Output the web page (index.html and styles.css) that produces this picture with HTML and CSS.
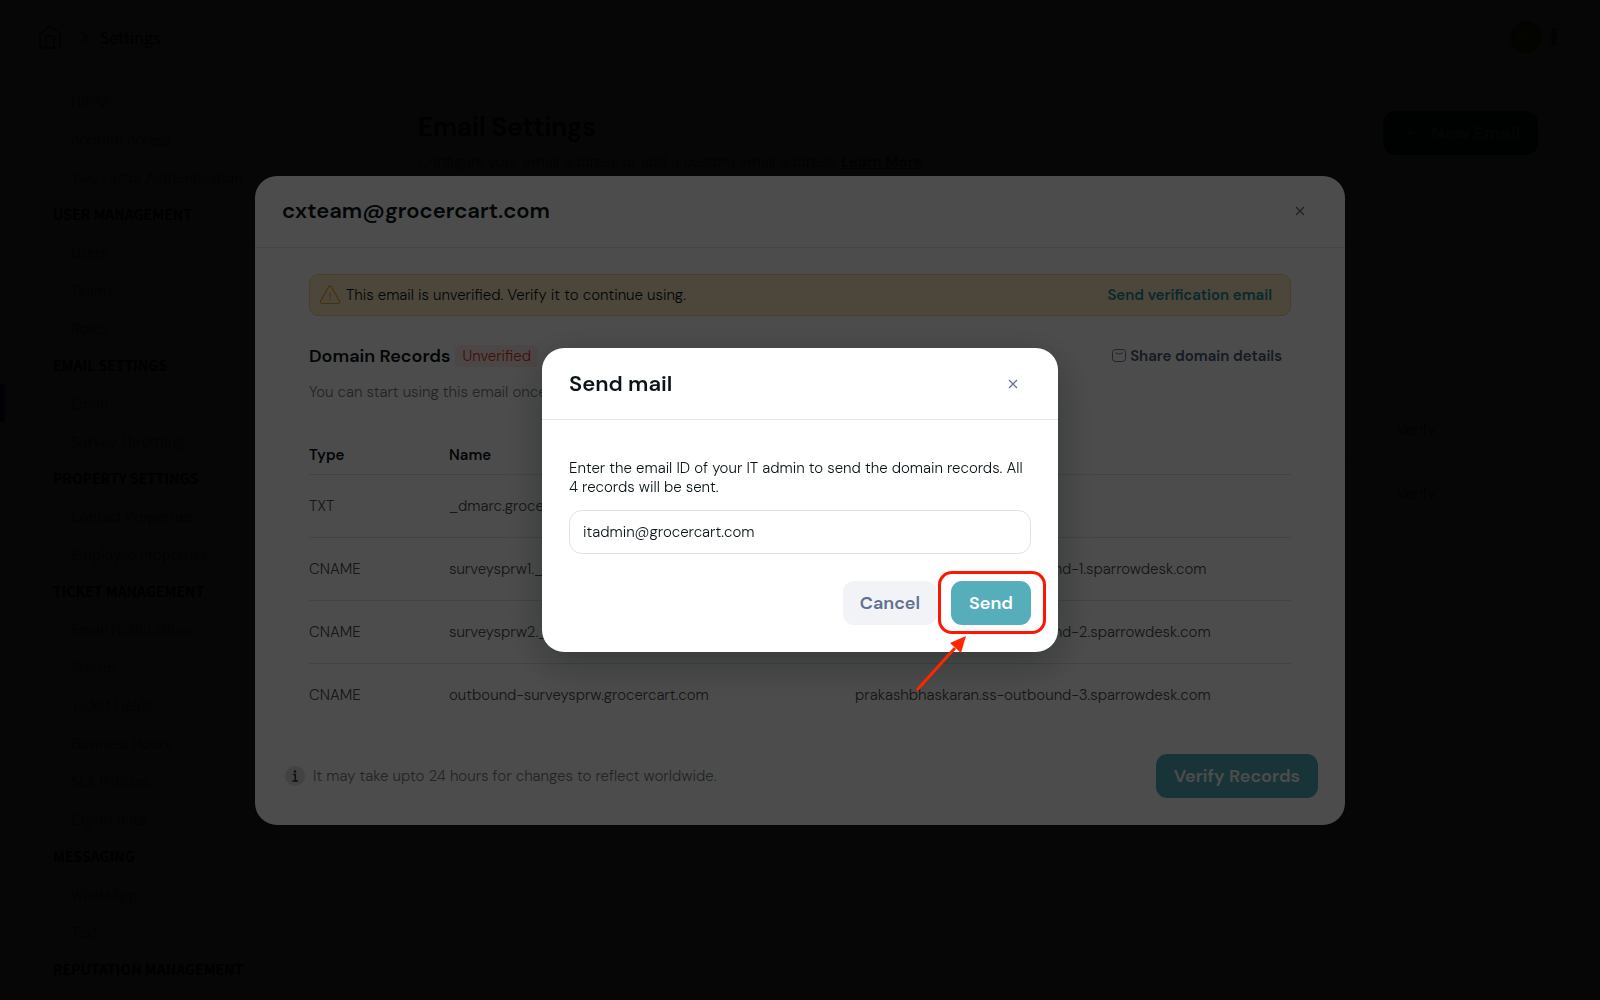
FILE: index.html
```html
<!DOCTYPE html>
<html lang="en">
<head>
<meta charset="utf-8">
<meta name="viewport" content="width=device-width, initial-scale=1">
<title>Email Settings</title>
<link rel="stylesheet" href="styles.css">
</head>
<body>
<div class="app">
  <header class="topbar">
    <nav class="crumbs" aria-label="Breadcrumb">
      <a href="#" class="home" aria-label="Home">
        <svg width="24" height="26" viewBox="0 0 24 26" fill="none" stroke="currentColor" stroke-width="2" stroke-linejoin="round"><path d="M2 10 12 2l10 8v12a2 2 0 0 1-2 2H4a2 2 0 0 1-2-2z"/><path d="M8 24V14q0-2 2-2h4q2 0 2 2v10"/></svg>
      </a>
      <svg class="chevron" width="8" height="14" viewBox="0 0 8 14" fill="none" stroke="currentColor" stroke-width="2"><path d="m1 1 6 6-6 6"/></svg>
      <a href="#" class="crumb">Settings</a>
    </nav>
    <div class="account">
      <span class="avatar">PB</span>
      <button class="more" aria-label="More">
        <svg width="6" height="18" viewBox="0 0 6 18" fill="none" stroke="currentColor" stroke-width="1.5"><circle cx="3" cy="3" r="2"/><circle cx="3" cy="9" r="2"/><circle cx="3" cy="15" r="2"/></svg>
      </button>
    </div>
  </header>
  <div class="columns">
    <nav class="sidebar" aria-label="Settings">
      <a href="#">HIPAA</a>
      <a href="#">Account Access</a>
      <a href="#">Two Factor Authentication</a>
      <h2>USER MANAGEMENT</h2>
      <a href="#">Users</a>
      <a href="#">Teams</a>
      <a href="#">Roles</a>
      <h2>EMAIL SETTINGS</h2>
      <a href="#" class="active">Email</a>
      <a href="#">Survey Throttling</a>
      <h2>PROPERTY SETTINGS</h2>
      <a href="#">Contact Properties</a>
      <a href="#">Employee Properties</a>
      <h2>TICKET MANAGEMENT</h2>
      <a href="#">Email Notifications</a>
      <a href="#">Macros</a>
      <a href="#">Ticket Fields</a>
      <a href="#">Business Hours</a>
      <a href="#">SLA Policies</a>
      <a href="#">Export data</a>
      <h2>MESSAGING</h2>
      <a href="#">WhatsApp</a>
      <a href="#">Text</a>
      <h2>REPUTATION MANAGEMENT</h2>
    </nav>
    <main class="main">
      <div class="page-head">
        <div>
          <h1>Email Settings</h1>
          <p>Configure your email address or add a custom email address. <a href="#">Learn More</a></p>
        </div>
        <button class="new-email">
          <svg width="14" height="14" viewBox="0 0 14 14" fill="none" stroke="currentColor" stroke-width="1.5"><path d="M7 1v12M1 7h12"/></svg>
          New Email
        </button>
      </div>
      <ul class="emails">
        <li><button>Verify</button></li>
        <li><button>Verify</button></li>
      </ul>
    </main>
  </div>
</div>

<div class="overlay overlay-page">
  <section class="modal records" role="dialog" aria-labelledby="records-title">
    <header class="modal-head">
      <h2 id="records-title">cxteam@grocercart.com</h2>
      <button class="close" aria-label="Close"><svg width="10" height="10" viewBox="0 0 10 10" fill="none" stroke="currentColor" stroke-width="1.2"><path d="m1 1 8 8M9 1 1 9"/></svg></button>
    </header>
    <div class="records-body">
      <div class="notice">
        <svg width="22" height="20" viewBox="0 0 22 20" fill="none" stroke="currentColor" stroke-width="1.2" stroke-linejoin="round" stroke-linecap="round"><path d="M9.500 2a1.800 1.800 0 0 1 3 0l8 14a1.700 1.700 0 0 1-1.500 2.500H3A1.700 1.700 0 0 1 1.500 16z"/><path d="M11 7.500v4.500M11 14.500v.2"/></svg>
        <span>This email is unverified. Verify it to continue using.</span>
        <button class="resend">Send verification email</button>
      </div>
      <div class="domain-head">
        <h3>Domain Records</h3>
        <span class="tag">Unverified</span>
        <button class="share">
          <svg width="14" height="13" viewBox="0 0 14 13" fill="none" stroke="currentColor" stroke-width=".8"><rect x=".5" y=".5" width="13" height="12" rx="3"/><path d="M3.500 4q3.500 2.500 7 0" stroke-linecap="round"/></svg>
          Share domain details
        </button>
      </div>
      <p class="hint">You can start using this email once</p>
      <table class="dns">
        <thead><tr><th class="type">Type</th><th class="name">Name</th><th aria-label="Value"></th></tr></thead>
        <tbody>
          <tr><td>TXT</td><td>_dmarc.grocercart.com</td><td>v=DMARC1; p=none</td></tr>
          <tr><td>CNAME</td><td>surveysprw1._domainkey.grocercart.com</td><td>prakashbhaskaran.ss-outbound-1.sparrowdesk.com</td></tr>
          <tr><td>CNAME</td><td>surveysprw2._domainkey.grocercart.com</td><td>prakashbhaskaran.ss-outbound-2.sparrowdesk.com</td></tr>
          <tr><td>CNAME</td><td>outbound-surveysprw.grocercart.com</td><td>prakashbhaskaran.ss-outbound-3.sparrowdesk.com</td></tr>
        </tbody>
      </table>
    </div>
    <footer class="records-foot">
      <svg class="info" width="20" height="20" viewBox="0 0 20 20"><circle cx="10" cy="10" r="10" fill="#dcdcdc"/><circle cx="10" cy="5.500" r="1.200" fill="#333"/><path d="M8 8.500h2.300V15M7.500 15h5.500" fill="none" stroke="#333" stroke-width="1.500"/></svg>
      <span>It may take upto 24 hours for changes to reflect worldwide.</span>
      <button class="btn primary">Verify Records</button>
    </footer>
  </section>
</div>

<div class="overlay overlay-modal">
  <form class="modal send" role="dialog" aria-labelledby="send-title">
    <header class="modal-head">
      <h2 id="send-title">Send mail</h2>
      <button type="button" class="close" aria-label="Close"><svg width="10" height="10" viewBox="0 0 10 10" fill="none" stroke="currentColor" stroke-width="1.2"><path d="m1 1 8 8M9 1 1 9"/></svg></button>
    </header>
    <div class="send-body">
      <label for="admin">Enter the email ID of your IT admin to send the domain records. All 4 records will be sent.</label>
      <input id="admin" type="email" value="itadmin@grocercart.com">
      <div class="actions">
        <button type="button" class="btn">Cancel</button>
        <div class="marked">
          <button type="button" class="btn primary">Send</button>
          <span class="ring"></span>
          <svg class="arrow" width="52" height="56" viewBox="0 0 52 56"><path d="M2 55 40 13" stroke="#ff2600" stroke-width="3"/><path d="M51 1 46 18 35 8z" fill="#ff2600"/></svg>
        </div>
      </div>
    </div>
  </form>
</div>
</body>
</html>
```
FILE: styles.css
```css
* { box-sizing: border-box; }

body {
  margin: 0;
  height: 100vh;
  overflow: hidden;
  background: #fff;
  color: #0b1518;
  font: 15px/20px "DM Sans", Inter, sans-serif;
  font-weight: 300;
}

h1, h2, h3, p, ul { margin: 0; padding: 0; }
button { border: 0; padding: 0; background: none; font: inherit; color: inherit; cursor: pointer; white-space: nowrap; }

/* Page behind the dialogs */
.topbar {
  display: flex;
  align-items: center;
  justify-content: space-between;
  height: 74px;
  padding: 0 43px 0 38px;
}
.crumbs { display: flex; align-items: center; gap: 18px; font: 16px/24px "Noto Sans CJK SC", sans-serif; }
.home { display: flex; color: #777; }
.chevron { color: #999; margin-right: -6px; }
.crumb { color: #000; text-decoration: none; }
.account { display: flex; align-items: center; gap: 9px; }
.avatar {
  width: 32px;
  height: 32px;
  border-radius: 50%;
  background: #8a8020;
  color: #ddd;
  text-align: center;
  line-height: 32px;
}
.more { display: flex; color: #222; }

.columns { display: flex; }
.sidebar { flex: 0 0 255px; margin-top: 8px; font: 14px/38px "Noto Sans CJK SC", sans-serif; }
.sidebar a { display: block; padding-left: 71px; color: #888; text-decoration: none; white-space: nowrap; }
.sidebar h2 { padding-left: 53px; font-size: 14px; line-height: 37px; font-weight: 700; color: #000; white-space: nowrap; }
.sidebar .active { padding-left: 66px; border-left: 5px solid #0010ff; }

.main { flex: 1; padding: 37px 62px 0 163px; }
.page-head { display: flex; justify-content: space-between; align-items: flex-start; }
.page-head h1 { font-size: 26px; line-height: 32px; font-weight: 600; }
.page-head p { margin-top: 8px; color: #666; line-height: 22px; }
.page-head p a { color: #1a6a6a; font-weight: 600; }
.new-email {
  display: flex;
  align-items: center;
  gap: 14px;
  height: 44px;
  padding: 0 18px 0 20px;
  border-radius: 12px;
  background: #286c68;
  color: #bbb;
  font-size: 18px;
  font-weight: 600;
}
.emails { margin-top: 226px; list-style: none; }
.emails li { display: flex; justify-content: flex-end; height: 63px; padding: 21px 102px 0 0; }
.emails li + li { border-top: 1px solid #ccc; }
.emails button { height: 20px; color: #555; }

/* Dialog layers */
.overlay { position: fixed; inset: 0; display: flex; align-items: center; justify-content: center; }
.overlay-page { background: rgba(0, 0, 0, .92); }
.overlay-modal { background: rgba(0, 0, 0, .7); }
.modal { background: #fff; border-radius: 22px; }
.modal-head {
  display: flex;
  align-items: center;
  justify-content: space-between;
  height: 72px;
  padding: 0 40px 0 27px;
  border-bottom: 1px solid #e6e7ea;
}
.modal-head h2 { font-size: 22px; line-height: 28px; font-weight: 600; }
.close { display: flex; color: #5f6f88; }
.btn {
  height: 44px;
  padding: 0 17px;
  border-radius: 11px;
  background: #f2f3f6;
  color: #5f7190;
  font-size: 18px;
  font-weight: 600;
}
.primary { padding: 0 18px; background: #56aebb; color: #fff; }

/* Domain records */
.records { width: 1090px; max-width: calc(100% - 64px); }
.records-body { padding: 26px 54px 0; }
.notice {
  display: flex;
  align-items: center;
  gap: 5px;
  height: 42px;
  padding: 0 18px 0 9px;
  border: 1px solid #f5cf90;
  border-radius: 9px;
  background: #ffebc6;
}
.notice svg { color: #f0a030; }
.resend { margin-left: auto; color: #1f8a98; font-weight: 600; }
.domain-head { display: flex; align-items: center; gap: 5px; margin-top: 28px; padding-right: 9px; }
.domain-head h3 { font-size: 18px; line-height: 24px; font-weight: 600; }
.tag { padding: 1px 7px; border-radius: 5px; background: #ffeeea; color: #d8361c; }
.share { display: flex; align-items: center; gap: 4px; margin-left: auto; color: #4c5878; font-weight: 600; }
.hint { margin-top: 14px; color: #767a80; }
.dns { width: 100%; margin-top: 35px; border-collapse: collapse; table-layout: fixed; text-align: left; }
.dns th { height: 38px; padding: 0; font-weight: 600; border-bottom: 1px solid #dfe2e5; }
.dns td { height: 63px; padding: 0; color: #4a4d52; }
.dns tr + tr td { border-top: 1px solid #dfe2e5; }
.dns .type { width: 140px; }
.dns .name { width: 406px; }
.records-foot { display: flex; align-items: center; gap: 8px; padding: 27px 27px 27px 30px; color: #767a80; }
.records-foot .btn { margin-left: auto; }

/* Send mail */
.send { width: 516px; max-width: calc(100% - 64px); box-shadow: 0 12px 40px rgba(0, 10, 10, .3); }
.send-body { padding: 39px 27px 27px; }
.send-body label { display: block; line-height: 19px; }
.send-body input {
  width: 100%;
  height: 44px;
  margin-top: 13px;
  padding: 0 13px;
  border: 1px solid #e2e3e5;
  border-radius: 13px;
  background: #fff;
  color: inherit;
  font: inherit;
}
.actions { display: flex; justify-content: flex-end; gap: 14px; margin-top: 27px; }
.marked { position: relative; }
.ring { position: absolute; inset: -10px -15px -9px -13px; border: 3px solid #ff1500; border-radius: 14px; pointer-events: none; }
.arrow { position: absolute; left: -36px; top: 54px; pointer-events: none; }
```
